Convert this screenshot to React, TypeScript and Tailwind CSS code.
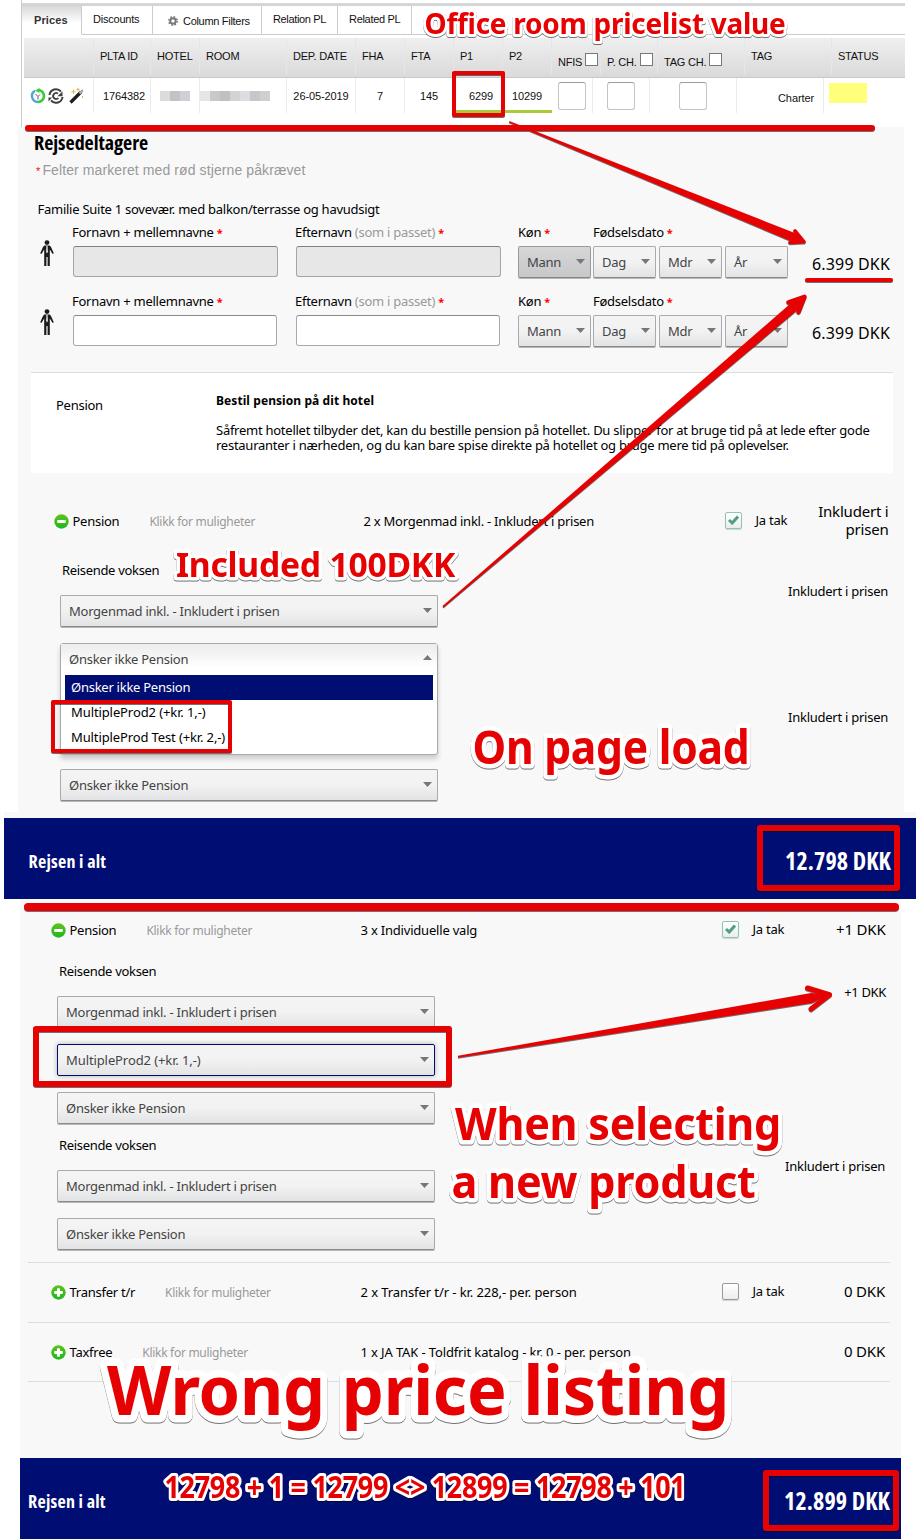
import type { ReactNode } from 'react';

const RED = '#e60202';

function Star() {
  return <span className="ml-[3px] text-[11px] leading-none font-bold text-[#f00]">*</span>;
}

function Arrow({ up = false }: { up?: boolean }) {
  return (
    <svg width="9" height="5" viewBox="0 0 9 5" className="shrink-0">
      <path d={up ? 'M0 5 L4.5 0 L9 5 Z' : 'M0 0 L9 0 L4.5 5 Z'} fill="#777" />
    </svg>
  );
}

function Select({ label, className = '', disabled = false, focused = false }: { label: string; className?: string; disabled?: boolean; focused?: boolean }) {
  const look = disabled
    ? 'border-[#9a9a9a] border-b-[#858585] bg-linear-to-b from-[#d6d6d6] to-[#c8c8cb] shadow-[0_1px_0_rgba(140,140,140,0.6)]'
    : focused
      ? 'border-[#000d72] bg-linear-to-b from-[#f4f4f4] via-[#f2f2f2] to-[#e3e4e6] shadow-[0_0_5px_rgba(0,0,0,0.3)]'
      : 'border-[#aaa] border-b-[#8a8a8a] bg-linear-to-b from-[#f4f4f4] via-[#f2f2f2] to-[#e2e3e5] shadow-[0_1px_0_rgba(140,140,140,0.6)]';
  return (
    <div className={`flex h-[32px] shrink-0 items-center justify-between rounded-[2px] border pr-[5px] pl-2 text-[#444] ${look} ${className}`}>
      <span>{label}</span>
      <span className="-mt-[1px] flex"><Arrow /></span>
    </div>
  );
}

function Person() {
  return (
    <svg width="14" height="27" viewBox="0 0 14 27" fill="#1b1b1b">
      <circle cx="7" cy="2.6" r="2.4" />
      <path d="M4.3 5.6 H9.7 L11 7 L13.8 13.2 L12.6 14 L9.8 9.6 V26 H7.6 V17 H6.4 V26 H4.2 V9.6 L1.4 14 L0.2 13.2 L3 7 Z" />
      <path d="M6.4 5.8 H7.6 L7.9 12 L7 13.6 L6.1 12 Z" fill="#e6e6e6" />
    </svg>
  );
}

function Traveller({ filled = false }: { filled?: boolean }) {
  const field = filled
    ? 'w-[205px] bg-[#e7e7e7] border-[#a5a5a5] border-t-[#808080]'
    : 'w-[204px] bg-white border-[#a9a9a9] border-t-[#8a8a8a]';
  return (
    <div className="flex h-[69px]">
      <div className="w-[32px] pt-[17px]"><Person /></div>
      <div className="w-[223px]">
        <div className="h-[23px] leading-[18px]">Fornavn + mellemnavne<Star /></div>
        <div className={`ml-px h-[31px] rounded-[3px] border ${field}`} />
      </div>
      <div className="w-[223px]">
        <div className="h-[23px] leading-[18px]">Efternavn <span className="text-[#999]">(som i passet)</span><Star /></div>
        <div className={`ml-px h-[31px] rounded-[3px] border ${field}`} />
      </div>
      <div className="w-[75px]">
        <div className="h-[23px] leading-[18px]">Køn<Star /></div>
        <Select label="Mann" disabled={filled} className="w-[73px]" />
      </div>
      <div className="w-[196px]">
        <div className="h-[23px] leading-[18px]">Fødselsdato<Star /></div>
        <div className="flex gap-[3px]">
          <Select label="Dag" className="w-[63px]" />
          <Select label="Mdr" className="w-[63px]" />
          <Select label="År" className="w-[63px]" />
        </div>
      </div>
      <div className="w-[101px] pt-[31px] text-right text-[16px] leading-[20px] tracking-[0.16px]">6.399 DKK</div>
    </div>
  );
}

function ToggleIcon({ plus = false }: { plus?: boolean }) {
  return (
    <svg width="15" height="15" viewBox="0 0 15 15">
      <defs>
        <linearGradient id="green" x1="0" y1="0" x2="0" y2="1">
          <stop offset="0" stopColor="#5cc41c" />
          <stop offset="1" stopColor="#1fb61f" />
        </linearGradient>
      </defs>
      <circle cx="7.5" cy="7.5" r="7.2" fill="url(#green)" />
      <rect x="3.2" y="6" width="8.6" height="3" rx="0.8" fill="#fff" />
      {plus && <rect x="6" y="3.2" width="3" height="8.6" rx="0.8" fill="#fff" />}
    </svg>
  );
}

function Check({ checked }: { checked: boolean }) {
  return (
    <span className={`flex h-[17px] w-[17px] items-center justify-center rounded-[2px] border bg-linear-to-b from-white to-[#ececec] shadow-[0_1px_1px_rgba(0,0,0,0.15)] ${checked ? 'border-[#8cc7b3]' : 'border-[#999]'}`}>
      {checked && (
        <svg width="11" height="10" viewBox="0 0 11 10">
          <path d="M1 5 L4.2 8 L10 1.6" fill="none" stroke="#4f9f86" strokeWidth="3" />
        </svg>
      )}
    </span>
  );
}

function Option({ name, detail, price, plus, checked, className = '' }: { name: string; detail: ReactNode; price: ReactNode; plus?: boolean; checked?: boolean; className?: string }) {
  return (
    <div className={`grid w-[835px] grid-cols-[310px_361px_31px_1fr] items-center ${className}`}>
      <div className="flex items-center">
        <ToggleIcon plus={plus} />
        <span className="ml-[4px]">{name}</span>
        <span className="ml-[30px] pt-px text-[12px] tracking-[-0.29px] text-[#999]">Klikk for muligheter</span>
      </div>
      <div>{detail}</div>
      <div className="-mt-[2px]">{checked !== undefined && <Check checked={checked} />}</div>
      <div className="flex items-center justify-between">
        <span className="-mt-[2px]">{checked !== undefined ? 'Ja tak' : ''}</span>
        <span className="-mt-[2px] text-right text-[15px] leading-[18px] tracking-[-0.2px]">{price}</span>
      </div>
    </div>
  );
}

function Total({ amount, className = '' }: { amount: string; className?: string }) {
  return (
    <div className={`flex h-[81px] items-center justify-between bg-[#000d72] font-['Open_Sans'] font-bold text-white [font-stretch:75%] ${className}`}>
      <span className="pt-[5px] text-[18px] tracking-[0.22px]">Rejsen i alt</span>
      <span className="pt-[5px] text-[24px] tracking-[0.12px]">{amount}</span>
    </div>
  );
}

function Gear() {
  return (
    <svg width="10" height="10" viewBox="0 0 10 10">
      <circle cx="5" cy="5" r="2.7" fill="none" stroke="#777" strokeWidth="2" />
      <circle cx="5" cy="5" r="4.3" fill="none" stroke="#777" strokeWidth="1.4" strokeDasharray="1.7 1.68" />
    </svg>
  );
}

function RowIcons() {
  return (
    <div className="flex items-center gap-[2px] pl-[6px]">
      <svg width="16" height="16" viewBox="0 0 16 16" fill="none">
        <path d="M8 2 A6 6 0 0 1 8 14" stroke="#3cc83c" strokeWidth="2.6" />
        <path d="M8 14 A6 6 0 0 1 5 2.8" stroke="#5aa2d2" strokeWidth="2.4" />
        <path d="M5 2.6 L9.5 0 V5 Z" fill="#37d437" />
        <path d="M5.5 6 L8 8.5 V11.5 M8 8.5 L10 6.5" stroke="#456" strokeWidth="0.9" />
      </svg>
      <svg width="16" height="16" viewBox="0 0 16 16" fill="none" stroke="#3f3f3f">
        <path d="M1.5 7 A6.5 6.5 0 0 1 13 3.6" strokeWidth="2" />
        <path d="M14.5 9 A6.5 6.5 0 0 1 3 12.4" strokeWidth="2" />
        <path d="M10 5.6 A3 3 0 1 0 10.4 10" strokeWidth="1.8" />
        <path d="M14.5 3.5 V8.2 H9.4 Z M0.5 13.6 V9.5 H4 Z" fill="#3f3f3f" stroke="none" />
      </svg>
      <svg width="16" height="16" viewBox="0 0 16 16" fill="none" className="ml-[3px]">
        <path d="M1.5 14.5 L12 4" stroke="#1d1d1d" strokeWidth="3.2" />
        <path d="M10.5 5.5 L13.8 2.2" stroke="#aaa" strokeWidth="2.6" />
        <path d="M4.5 1.5 V6 M2.3 3.8 H6.8 M9 0 V3 M7.5 1.5 H10.5 M13.5 8 V10" stroke="#e2b64c" strokeWidth="1" />
      </svg>
    </div>
  );
}

const HEADERS = ['', 'PLTA ID', 'HOTEL', 'ROOM', 'DEP. DATE', 'FHA', 'FTA', 'P1', 'P2', 'NFIS', 'P. CH.', 'TAG CH.', 'TAG', 'STATUS'];
const BOXED = ['NFIS', 'P. CH.', 'TAG CH.'];
const MOSAIC_HOTEL = ['bg-[#dcdcdc]', 'bg-[#c3c3c3]', 'bg-[#cdd0d4]'];
const MOSAIC_ROOM = ['bg-[#e6e6e6]', 'bg-[#c9c9cb]', 'bg-[#bfc0c2]', 'bg-[#d3d3d5]', 'bg-[#dddde1]', 'bg-[#c6c7c9]', 'bg-[#cfcfcf]'];

function Cell({ children, className = '' }: { children?: ReactNode; className?: string }) {
  return <div className={`flex items-center border-r border-[#ebebeb] ${className}`}>{children}</div>;
}

function Box() {
  return <span className="h-[28px] w-[28px] rounded-[3px] border border-[#c4c4c4] border-t-[#9c9c9c] bg-white" />;
}

function PriceList() {
  return (
    <div className="ml-[21px] h-[127px] w-[884px] border-l border-[#ccc] font-['Liberation_Sans'] text-[11px] tracking-[-0.22px] text-[#111]">
      <div className="h-[6px] border-b-2 border-[#d4d4d4] pt-[3px]"><div className="h-px bg-[#d9d9d9]" /></div>
      <div className="flex h-[29px] *:border-r *:border-b *:border-[#ccc] *:pt-[6px] *:leading-[14px]">
        <div className="w-[60px] border-b-white! bg-linear-to-b from-[#d8d8d8] to-white to-60% pl-[12px] pt-[7px]! font-bold tracking-[0.1px] text-[#333]">Prices</div>
        <div className="w-[71px] pl-[11px]">Discounts</div>
        <div className="flex w-[109px] gap-[5px] pl-[15px] pt-[8px]!"><span className="pt-[2px]"><Gear /></span><span className="tracking-[-0.3px]">Column Filters</span></div>
        <div className="w-[76px] pl-[11px] tracking-[-0.35px]">Relation PL</div>
        <div className="w-[74px] pl-[11px] tracking-[-0.3px]">Related PL</div>
        <div className="flex-1 border-r-0!" />
      </div>
      <div className="mt-[3px] ml-[2px] grid h-[40px] grid-cols-[70px_57px_49px_87px_69px_49px_49px_49px_49px_49px_57px_87px_87px_1fr] border-b border-[#c9c9c9] bg-linear-to-b from-[#efefef] to-[#dadada]">
        {HEADERS.map((h, i) => (
          <div key={i} className={`mb-[3px] flex items-center border-r border-[#e6e6e6] pl-[6px] whitespace-nowrap last:border-r-0 ${BOXED.includes(h) ? 'pt-px' : ''}`}>
            <span className={BOXED.includes(h) ? 'pt-[10px]' : ''}>{h}</span>
            {BOXED.includes(h) && <span className="mt-[6px] ml-[3px] h-[13px] w-[13px] border border-[#777] bg-white" />}
          </div>
        ))}
      </div>
      <div className="ml-[2px] grid h-[35px] grid-cols-[70px_57px_49px_87px_69px_49px_49px_49px_49px_41px_57px_87px_87px_1fr] tracking-[-0.1px]">
        <Cell><RowIcons /></Cell>
        <Cell className="justify-center pt-px pl-[4px]">1764382</Cell>
        <Cell className="pl-[9px]">{MOSAIC_HOTEL.map((c) => <span key={c} className={`h-[10px] w-[10px] ${c}`} />)}</Cell>
        <Cell>{MOSAIC_ROOM.map((c) => <span key={c} className={`h-[10px] w-[10px] ${c}`} />)}</Cell>
        <Cell className="justify-center pt-px">26-05-2019</Cell>
        <Cell className="justify-center pt-px">7</Cell>
        <Cell className="justify-center pt-px">145</Cell>
        <Cell className="justify-end border-r-0 border-b-[3px] border-b-[#a9cb3a] pr-[10px] pt-[4px]">6299</Cell>
        <Cell className="justify-end border-r-0 border-b-[3px] border-b-[#a9cb3a] pr-[10px] pt-[4px]">10299</Cell>
        <Cell className="justify-center"><Box /></Cell>
        <Cell className="justify-center"><Box /></Cell>
        <Cell className="justify-center"><Box /></Cell>
        <Cell className="justify-end pr-[9px] pt-[5px]">Charter</Cell>
        <div className="pt-[5px] pl-[5px]"><div className="h-[20px] w-[38px] bg-[#ffff7b]" /></div>
      </div>
    </div>
  );
}

function Note({ x, y, size, width, outline, children }: { x: number; y: number; size: number; width: number; outline: number; children: ReactNode }) {
  return (
    <text x={x} y={y} fontSize={size} textLength={width} lengthAdjust="spacingAndGlyphs" fill={RED} stroke="#fff" strokeWidth={outline} strokeLinejoin="round" className="font-['Noto_Sans'] font-bold [filter:drop-shadow(0_1px_0.5px_rgba(0,0,0,0.55))] [paint-order:stroke]">
      {children}
    </text>
  );
}

function Annotations() {
  return (
    <svg className="pointer-events-none absolute inset-0" width="921" height="1539" viewBox="0 0 921 1539">
      <g className="[filter:drop-shadow(0_1px_0.5px_rgba(0,0,0,0.55))]" fill={RED} stroke={RED}>
        <path d="M509.3 121 L796 233.5 L804 242 L793 242 L509 122.5 Z" stroke="none" />
        <path d="M795 231 L804 241.8 L790 242.5" fill="none" strokeWidth="3.6" strokeLinecap="round" strokeLinejoin="round" />
        <path d="M442.5 606 L794 300.5 L805 296 L800.5 307.5 L443.5 607.5 Z" stroke="none" />
        <path d="M788.5 302.3 L804.5 296.8 L798.5 312" fill="none" strokeWidth="4.4" strokeLinecap="round" strokeLinejoin="round" />
        <path d="M458 1055.8 L811 993 L830 994.5 L812 1003 L458 1057.8 Z" stroke="none" />
        <path d="M807.5 988 L829.5 994.7 L811 1009" fill="none" strokeWidth="5" strokeLinecap="round" strokeLinejoin="round" />
        <g fill="none" strokeLinecap="round" strokeLinejoin="round">
          <path d="M28 128 H872" strokeWidth="6" />
          <path d="M28 907 H895" strokeWidth="8" />
          <path d="M807 280 H891" strokeWidth="4" />
          <rect x="454" y="73" width="49" height="42" strokeWidth="4" />
          <rect x="53" y="702" width="177" height="49" strokeWidth="4" />
          <rect x="760" y="828" width="137" height="60" strokeWidth="6" />
          <rect x="36" y="1029" width="413" height="55" strokeWidth="6" />
          <rect x="766" y="1473" width="130" height="55" strokeWidth="6" />
        </g>
      </g>
      <Note x={424.5} y={33.5} size={28.5} width={361} outline={6}>Office room pricelist value</Note>
      <Note x={176} y={577} size={34} width={279} outline={7}>Included 100DKK</Note>
      <Note x={472.5} y={764} size={46} width={277} outline={9}>On page load</Note>
      <Note x={455} y={1140} size={45.5} width={326} outline={9}>When selecting</Note>
      <Note x={451.5} y={1198} size={45.5} width={304} outline={9}>a new product</Note>
      <Note x={107} y={1415} size={69} width={622} outline={15}>Wrong price listing</Note>
      <Note x={164.5} y={1498} size={29.5} width={521} outline={6}>{'12798 + 1 = 12799 <> 12899 = 12798 + 101'}</Note>
    </svg>
  );
}

export default function App() {
  return (
    <div className="relative h-[1539px] w-[921px] overflow-hidden bg-white font-['Noto_Sans'] text-[13px] leading-[18px] tracking-[-0.26px] whitespace-nowrap text-black">
      <PriceList />

      <section className="ml-[18px] h-[685px] w-[886px] bg-[#f8f8f8] pt-px">
        <h1 className="ml-[16px] h-[32px] pt-px font-['Open_Sans'] text-[20px] leading-[28px] font-bold tracking-[-0.05px] [font-stretch:75%]">Rejsedeltagere</h1>
        <p className="ml-[18px] h-[40px] font-['Liberation_Sans'] text-[14px] leading-[20px] tracking-[0.1px] text-[#999]"><span className="mr-[2px] text-[11px] text-[#f00]">*</span>Felter markeret med rød stjerne påkrævet</p>
        <p className="ml-[19.5px] h-[23px]">Familie Suite 1 sovevær. med balkon/terrasse og havudsigt</p>
        <div className="ml-[22px]">
          <Traveller filled />
          <Traveller />
        </div>

        <div className="mt-[11px] ml-[13px] flex h-[101px] w-[862px] border-t border-[#ddd] bg-white">
          <div className="w-[185px] pt-[23px] pl-[25px]">Pension</div>
          <div className="leading-[15px]">
            <p className="mt-[20px] text-[12px] font-bold tracking-[0.08px]">Bestil pension på dit hotel</p>
            <p className="mt-[15px]">Såfremt hotellet tilbyder det, kan du bestille pension på hotellet. Du slipper for at bruge tid på at lede efter gode<br />restauranter i nærheden, og du kan bare spise direkte på hotellet og bruge mere tid på oplevelser.</p>
          </div>
        </div>

        <Option className="mt-[30px] ml-[35.5px] h-[36px]" name="Pension" detail="2 x Morgenmad inkl. - Inkludert i prisen" checked price={<>Inkludert i<br />prisen</>} />
        <div className="mt-[22px] ml-[42px] flex w-[828px] justify-between">
          <div>
            <p className="ml-[2px] h-[34px] tracking-[-0.32px]">Reisende voksen</p>
            <Select label="Morgenmad inkl. - Inkludert i prisen" className="w-[378px]" />
            <div className="relative mt-[16px] h-[110px]">
              <div className="absolute inset-x-0 top-0 h-[112px] rounded-[3px] border border-[#aaa] bg-white px-1 shadow-[0_4px_5px_rgba(0,0,0,0.18)]">
                <div className="-mx-1 flex h-[31px] items-center justify-between bg-linear-to-b from-[#ececec] to-white to-75% pr-[5px] pb-px pl-2 text-[#444]">
                  <span>Ønsker ikke Pension</span>
                  <span className="-mt-[3px] flex"><Arrow up /></span>
                </div>
                <div className="h-[25px] bg-[#000d72] pl-[6px] leading-[25px] text-white">Ønsker ikke Pension</div>
                <div className="h-[25px] pl-[6px] leading-[25px] tracking-[-0.1px]">MultipleProd2 (+kr. 1,-)</div>
                <div className="h-[25px] pl-[6px] leading-[25px] tracking-[-0.12px]">MultipleProd Test (+kr. 2,-)</div>
              </div>
            </div>
            <Select label="Ønsker ikke Pension" className="mt-[16px] w-[378px]" />
          </div>
          <div className="pt-[21px]">
            <p className="h-[126px]">Inkludert i prisen</p>
            <p>Inkludert i prisen</p>
          </div>
        </div>
      </section>
      <div className="ml-[4px] h-[6px] w-[912px] bg-[#f8f8f8]" />
      <Total amount="12.798 DKK" className="ml-[4px] w-[912px] pr-[25px] pl-[24.5px]" />

      <section className="ml-[20px] h-[559px] w-[881px] bg-[#f8f8f8] pt-[16px]">
        <Option className="ml-[30.5px] h-[30px]" name="Pension" detail={<span className="tracking-[-0.2px]">3 x Individuelle valg</span>} checked price="+1 DKK" />
        <div className="mt-[17px] ml-[37px] flex h-[300px] w-[828px] justify-between">
          <div>
            <p className="ml-[2px] h-[34px] tracking-[-0.32px]">Reisende voksen</p>
            <div className="flex flex-col gap-[16px] [&>*:nth-child(2)]:tracking-[-0.1px]">
              <Select label="Morgenmad inkl. - Inkludert i prisen" className="w-[378px]" />
              <Select label="MultipleProd2 (+kr. 1,-)" focused className="w-[378px]" />
              <Select label="Ønsker ikke Pension" className="w-[378px]" />
            </div>
            <p className="mt-[12px] ml-[2px] h-[34px] tracking-[-0.32px]">Reisende voksen</p>
            <div className="flex flex-col gap-[16px]">
              <Select label="Morgenmad inkl. - Inkludert i prisen" className="w-[378px]" />
              <Select label="Ønsker ikke Pension" className="w-[378px]" />
            </div>
          </div>
          <div className="pt-[21px] text-right">
            <p className="-mr-px h-[174px] tracking-[-0.35px]">+1 DKK</p>
            <p>Inkludert i prisen</p>
          </div>
        </div>
        <div className="ml-[8px] w-[862px] divide-y divide-[#ddd] border-y border-[#ddd]">
          <Option className="h-[60px] w-auto! pr-[5px] pb-px pl-[22.5px]" name="Transfer t/r" detail={<span className="tracking-[-0.08px]">2 x Transfer t/r - kr. 228,- per. person</span>} plus checked={false} price="0 DKK" />
          <Option className="h-[58px] w-auto! pr-[5px] pl-[22.5px]" name="Taxfree" detail={<span className="tracking-[-0.13px]">1 x JA TAK - Toldfrit katalog - kr. 0,- per. person</span>} plus price="0 DKK" />
        </div>
      </section>
      <Total amount="12.899 DKK" className="ml-[20px] w-[881px] pr-[11px] pl-[8px]" />

      <Annotations />
    </div>
  );
}
